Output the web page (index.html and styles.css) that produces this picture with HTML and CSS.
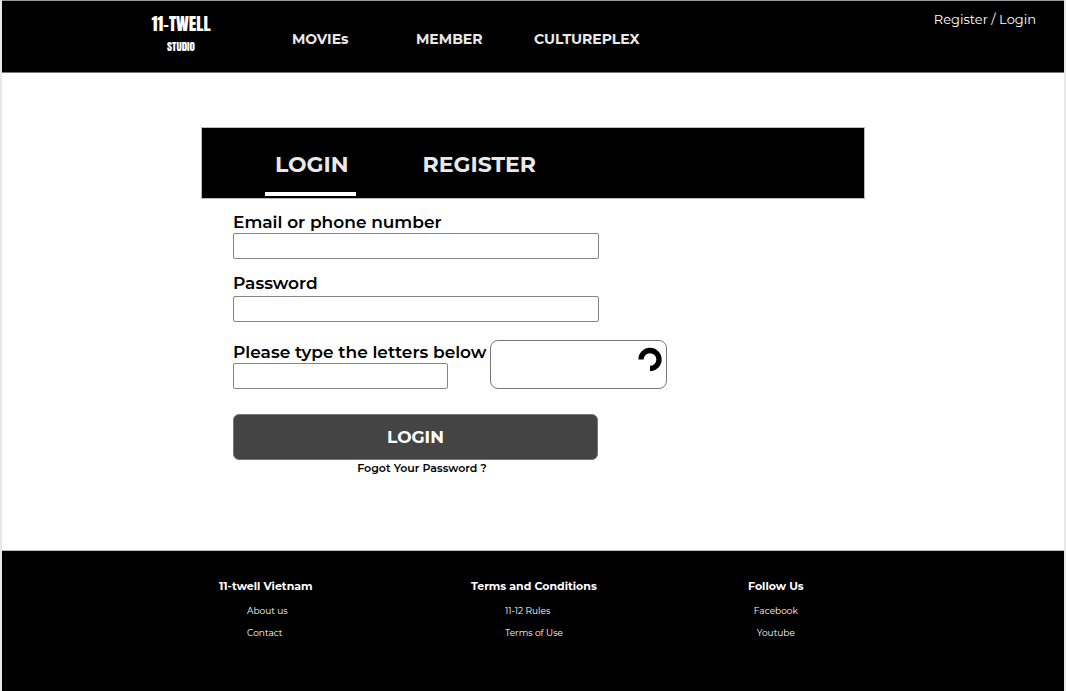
FILE: index.html
```html
<!DOCTYPE html>
<html lang="en">
<head>
<meta charset="utf-8">
<meta name="viewport" content="width=device-width, initial-scale=1">
<title>11-Twell Studio</title>
<link rel="stylesheet" href="styles.css">
</head>
<body>
<div class="page">
  <header class="header">
    <a class="logo" href="#" aria-label="11-Twell Studio">
      <span class="logo-name">11-TWELL</span>
      <span class="logo-sub">STUDIO</span>
    </a>
    <nav class="nav">
      <a href="#">MOVIEs</a>
      <a href="#">MEMBER</a>
      <a href="#">CULTUREPLEX</a>
    </nav>
    <a class="account" href="#">Register / Login</a>
  </header>

  <main class="main">
    <section class="panel">
      <nav class="tabs">
        <a class="tab tab-active" href="#">LOGIN</a>
        <a class="tab" href="#">REGISTER</a>
      </nav>
      <form class="form">
        <div class="field">
          <label for="email">Email or phone number</label>
          <input id="email" type="text">
        </div>
        <div class="field field-password">
          <label for="password">Password</label>
          <input id="password" type="password">
        </div>
        <div class="captcha-row">
          <div class="field field-letters">
            <label for="letters">Please type the letters below</label>
            <input id="letters" type="text">
          </div>
          <div class="captcha">
            <svg class="reload" viewBox="0 0 24 24" aria-hidden="true"><path d="M3 12.5A9 9 0 1 1 12 21.5" fill="none" stroke="#000" stroke-width="5.3"/></svg>
          </div>
        </div>
        <button class="submit" type="submit">LOGIN</button>
        <a class="forgot" href="#">Fogot Your Password ?</a>
      </form>
    </section>
  </main>

  <footer class="footer">
    <section class="links links-company">
      <h2>11-twell Vietnam</h2>
      <a href="#">About us</a>
      <a href="#">Contact</a>
    </section>
    <section class="links links-terms">
      <h2>Terms and Conditions</h2>
      <a href="#">11-12 Rules</a>
      <a href="#">Terms of Use</a>
    </section>
    <section class="links links-social">
      <h2>Follow Us</h2>
      <a href="#">Facebook</a>
      <a href="#">Youtube</a>
    </section>
  </footer>
</div>
</body>
</html>
```
FILE: styles.css
```css
* { box-sizing: border-box; }
body {
  margin: 0;
  font-family: Montserrat, Inter, "Open Sans", sans-serif;
  color: #000;
  background: #fff;
}
a { color: inherit; text-decoration: none; }
.page {
  display: flex;
  flex-direction: column;
  min-height: 100vh;
  border: solid #e8e8e8;
  border-width: 0 2px;
}
.header {
  display: flex;
  align-items: flex-start;
  padding: 9px 28px 8px 149px;
  min-height: 73px;
  background: #000;
  color: #e9e9e9;
  border-top: 1px solid #999;
  border-bottom: 1px solid #777;
}
.logo {
  display: flex;
  flex-direction: column;
  align-items: center;
  width: 60px;
  font-family: Anton, "Bebas Neue", Oswald, Roboto, "Liberation Sans", sans-serif;
  font-weight: 400;
  color: #fff;
}
.logo-name { font-size: 18px; line-height: 28px; white-space: nowrap; }
.logo-sub { font-size: 11px; line-height: 18px; }
.nav {
  display: grid;
  grid-template-columns: 124px 118px auto;
  padding: 19px 0 0 81px;
  font-size: 14px;
  line-height: 20px;
  font-weight: 700;
}
.account {
  margin-left: auto;
  font-size: 13px;
  line-height: 18px;
  color: #fff;
}
.main { flex: 1; padding: 54px 16px 64px; }
.panel { max-width: 664px; margin: 0 auto; }
.tabs {
  display: flex;
  gap: 57px;
  height: 72px;
  padding: 0 63px 2px;
  background: #000;
  border: 1px solid #bbb;
}
.tab {
  padding: 21px 7px 0 10px;
  font-size: 22px;
  line-height: 32px;
  font-weight: 700;
  color: #e9e9e9;
  border-bottom: 4px solid transparent;
}
.tab-active { border-color: #fff; }
.form {
  display: flex;
  flex-direction: column;
  max-width: 466px;
  padding: 12px 0 0 32px;
}
.field { display: flex; flex-direction: column; width: 366px; }
.field label {
  font-size: 17px;
  line-height: 22px;
  font-weight: 600;
  white-space: nowrap;
}
.field input {
  height: 26px;
  padding: 1px 6px;
  font: inherit;
  font-size: 14px;
  border: 1px solid #858585;
  border-radius: 2px;
  background: #fff;
}
.field-password { margin-top: 13px; }
.field-password label { padding-bottom: 2px; }
.captcha-row { display: flex; gap: 42px; margin-top: 18px; }
.field-letters { width: 215px; padding-top: 1px; }
.captcha {
  flex: none;
  display: flex;
  justify-content: flex-end;
  width: 177px;
  height: 49px;
  padding: 6px 4px;
  border: 1px solid #777;
  border-radius: 8px;
}
.reload { width: 24px; height: 24px; }
.submit {
  width: 365px;
  height: 46px;
  margin-top: 25px;
  border: 1px solid #777;
  border-radius: 6px;
  background: #444;
  color: #fff;
  font: inherit;
  font-size: 17px;
  font-weight: 700;
}
.forgot {
  width: 378px;
  text-align: center;
  font-size: 11px;
  line-height: 16px;
  font-weight: 600;
}
.footer {
  display: grid;
  grid-template-columns: 252px 277px auto;
  justify-content: start;
  min-height: 141px;
  padding: 27px 16px 24px 217px;
  background: #000;
  color: #fff;
  border-top: 1px solid #bbb;
}
.links { display: flex; flex-direction: column; }
.links h2 {
  margin: 0 0 6px;
  font-size: 11px;
  line-height: 16px;
  font-weight: 700;
}
.links a { font-size: 9px; line-height: 22px; color: #fff; }
.links-company a { padding-left: 28px; }
.links-terms a { padding-left: 34px; }
.links-social { align-items: center; }
```
